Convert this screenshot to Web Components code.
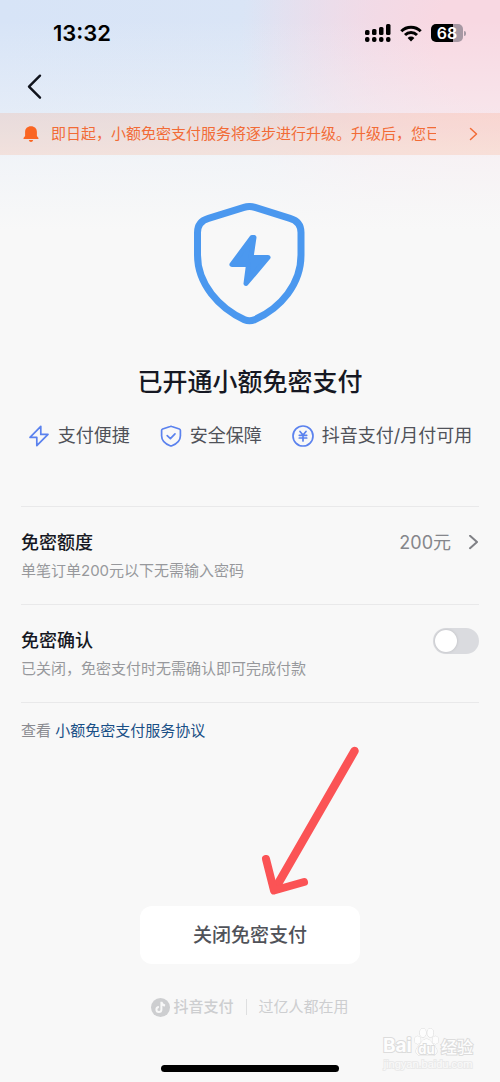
<!DOCTYPE html>
<html lang="zh-CN">
<head>
<meta charset="utf-8">
<meta name="viewport" content="width=device-width, initial-scale=1">
<title>小额免密支付</title>
<style>
  body {
    margin: 0;
    background: #f8f8f8;
    color: #161823;
    font-family: Inter, "Noto Sans CJK SC", sans-serif;
  }
</style>
</head>
<body>
<pay-page></pay-page>

<script>
const define = (name, html, setup) => {
  const template = document.createElement('template');
  template.innerHTML = html;
  customElements.define(name, class extends HTMLElement {
    constructor() {
      super();
      this.attachShadow({ mode: 'open' }).append(template.content.cloneNode(true));
    }
    connectedCallback() {
      if (setup) setup(this.shadowRoot, this);
    }
  });
};

/* Phone status bar: clock, signal, wifi, battery */
define('status-bar', `
  <style>
    :host { display: flex; align-items: center; justify-content: space-between; box-sizing: border-box;
      height: 60px; padding: 6px 34px 0 53px; color: #000; }
    time { font-size: 22px; line-height: 26px; font-weight: 600; }
    .icons { display: flex; align-items: center; gap: 9px; }
    svg { display: block; }
    .battery { display: flex; align-items: center; gap: 1px; }
    .cell { width: 32px; height: 18px; border-radius: 5px; text-align: center; color: #fff;
      font-size: 16px; line-height: 18px; font-weight: 600;
      background: linear-gradient(90deg, #000 68%, #a698a3 68%); }
    .nub { width: 2px; height: 5px; border-radius: 0 2px 2px 0; background: #a698a3; }
  </style>
  <time>13:32</time>
  <div class="icons">
    <svg width="26" height="18" viewBox="0 0 26 18" aria-hidden="true">
      <rect x="0" y="6" width="4.500" height="5" rx="1.500"/><rect x="7" y="5" width="4.500" height="6" rx="1.500"/>
      <rect x="14" y="3" width="4.500" height="8" rx="1.500"/><rect x="21" y="0" width="4.500" height="11" rx="1.500"/>
      <rect x="0" y="13" width="4.500" height="5" rx="2"/><rect x="7" y="13" width="4.500" height="5" rx="2"/>
      <rect x="14" y="13" width="4.500" height="5" rx="2"/><rect x="21" y="13" width="4.500" height="5" rx="2"/>
    </svg>
    <svg width="22" height="17" viewBox="0 0 22 17" aria-hidden="true">
      <g fill="none" stroke="#000" stroke-width="2.900"><path d="M1.300 6.300a13.800 13.800 0 0 1 19.400 0"/><path d="M5 10a8.500 8.500 0 0 1 12 0"/></g>
      <path d="M7.600 12.900a4.900 4.900 0 0 1 6.800 0L11 16.500z"/>
    </svg>
    <div class="battery"><div class="cell">68</div><div class="nub"></div></div>
  </div>`);

define('nav-bar', `
  <style>
    :host { display: flex; align-items: center; height: 53px; padding: 0 20px; }
    button { display: block; padding: 0 7px; border: 0; background: none; }
    svg { display: block; }
  </style>
  <button type="button" aria-label="返回">
    <svg width="15" height="26" viewBox="0 0 15 26" fill="none" stroke="#10131c" stroke-width="2.400" stroke-linecap="round" stroke-linejoin="round"><path d="M13 1.700L2 12.700l11 11"/></svg>
  </button>`);

define('notice-bar', `
  <style>
    :host { display: block; background: rgba(255, 110, 40, .13); color: #f26b36; }
    a { display: flex; align-items: center; height: 42px; padding: 0 22px 0 23px; color: inherit; text-decoration: none; }
    svg { display: block; flex: none; }
    span { flex: 1; min-width: 0; margin: 0 33px 0 12px; overflow: hidden; white-space: nowrap; font-size: 15px; line-height: 22px; }
  </style>
  <a href="#notice">
    <svg width="16" height="18" viewBox="0 0 16 18" fill="#fa6522" aria-hidden="true"><path d="M8 1.300c3.600 0 5.900 2.300 5.900 5.600v4l1.600 2.100q.4 1-.6 1H1.100q-1 0-.6-1l1.600-2.100v-4C2.100 3.600 4.400 1.300 8 1.300z"/><path d="M5.800 15h4.400Q9.700 17 8 17t-2.200-2z"/></svg>
    <span><slot></slot></span>
    <svg width="9" height="14" viewBox="0 0 9 14" fill="none" stroke="currentColor" stroke-width="1.500" stroke-linecap="round" stroke-linejoin="round"><path d="M1.500 1.500L7.500 7l-6 5.500"/></svg>
  </a>`);

define('hero-panel', `
  <style>
    :host { display: flex; flex-direction: column; align-items: center; padding-top: 48px; }
    svg { display: block; }
    h1 { margin: 39px 0 24px; font-size: 25px; line-height: 36px; font-weight: 500; }
    .features { display: flex; justify-content: center; gap: 30px; }
  </style>
  <svg width="112" height="122" viewBox="0 0 112 122" aria-hidden="true">
    <path d="M50 4.400Q55.500 2.600 61 4.400L96 15.300Q107 18.500 107 29.500V52C107 81 87 105 60.500 116.700Q55.500 119 50.500 116.700C25 105 3.500 81 3.500 52V29.500Q3.500 18.500 14.500 15.300z" fill="none" stroke="#4b98ef" stroke-width="7"/>
    <path d="M58 34.500L38 61.500H54.500L52 80.500L74 54.500H57L60 34.500z" fill="#4b98ef" stroke="#4b98ef" stroke-width="5" stroke-linejoin="round"/>
  </svg>
  <h1><slot name="title"></slot></h1>
  <div class="features"><slot></slot></div>`);

define('feature-item', `
  <style>
    :host { display: flex; align-items: center; gap: 8px; color: #505259; font-size: 18px; line-height: 24px; white-space: nowrap; }
    svg { display: block; }
  </style>
  <svg width="22" height="22" viewBox="0 0 22 22" fill="none" stroke="#5b82ee" stroke-width="1.700" stroke-linecap="round" stroke-linejoin="round" aria-hidden="true"></svg>
  <span><slot></slot></span>`, (root, host) => {
  root.querySelector('svg').innerHTML = {
    bolt: '<path d="M12.800 1.300L2 12.300H8.800V20.600L20 9.400H12.800z"/>',
    shield: '<path d="M10.200 1.500q.8-.3 1.600 0l7.600 2.500q1 .4 1 1.500v5.200c0 5-4 8.200-8.500 10q-.9.300-1.800 0C5.600 18.900 1.600 15.700 1.600 10.700V5.500q0-1.100 1-1.500z"/><path d="M7.200 10.600l3.200 3 4.600-4.800"/>',
    yen: '<circle cx="11" cy="11" r="10"/><path d="M8 6.500l3 3.500 3-3.500M7.300 10.300h7.400M7.300 13h7.400M11 10v6"/>'
  }[host.getAttribute('icon')];
});

const rowStyle = `
    :host { display: block; padding: 23px 0; border-bottom: 1px solid #e9e9ea; }
    .head { display: flex; align-items: center; justify-content: space-between; height: 26px;
      font-size: 18px; line-height: 26px; font-weight: 500; color: #161823; text-decoration: none; }
    p { margin: 5px 0 0; font-size: 15px; line-height: 20px; color: #97989c; }`;

define('link-row', `
  <style>${rowStyle}
    .value { display: flex; align-items: center; gap: 17px; font-weight: 400; color: #85868b; }
    svg { display: block; }
  </style>
  <a class="head" href="#limit">
    <slot name="label"></slot>
    <span class="value"><slot name="value"></slot>
      <svg width="11" height="16" viewBox="0 0 11 16" fill="none" stroke="#7f8085" stroke-width="2" stroke-linecap="round" stroke-linejoin="round"><path d="M2 0.800L9 7l-7 6.200"/></svg>
    </span>
  </a>
  <p><slot></slot></p>`);

define('switch-row', `
  <style>${rowStyle}
    input { appearance: none; flex: none; box-sizing: border-box; width: 46px; height: 26px; margin: 0; padding: 2px;
      border-radius: 13px; background: #dadbdf; }
    input::before { content: ""; display: block; width: 22px; height: 22px; border-radius: 50%; background: #fff; box-shadow: 0 0 3px rgba(0, 0, 0, .15); }
    input:checked { background: #4b98ef; }
    input:checked::before { margin-left: 20px; }
  </style>
  <div class="head"><label for="toggle"><slot name="label"></slot></label><input id="toggle" type="checkbox" role="switch"></div>
  <p><slot></slot></p>`);

define('close-action', `
  <style>
    :host { display: block; position: relative; width: 220px; margin: auto auto 0; }
    button { display: block; width: 100%; height: 58px; padding: 2px 0 0; border: 0; border-radius: 12px; background: #fff; color: #505259;
      font: inherit; font-size: 19px; line-height: 28px; font-weight: 500; }
    svg { position: absolute; left: 120px; bottom: 68px; pointer-events: none; }
  </style>
  <button type="button"><slot></slot></button>
  <svg width="100" height="151" viewBox="0 0 100 151" fill="none" stroke="#fb5355" stroke-width="8" stroke-linecap="round" stroke-linejoin="round" aria-hidden="true"><path d="M94.500 6L15 144" stroke-width="8.500"/><path d="M6 114l8 31.500L44 137"/></svg>`);

define('brand-footer', `
  <style>
    :host { display: flex; align-items: center; justify-content: center; height: 20px; font-size: 15px; line-height: 20px; color: #cdced0; }
    svg { display: block; margin-right: 3px; }
    .brand { font-weight: 500; }
    .slogan { margin-left: 12px; padding-left: 12px; border-left: 1px solid #dedfe0; line-height: 16px; }
  </style>
  <svg width="19" height="19" viewBox="0 0 19 19" aria-hidden="true"><circle cx="9.500" cy="9.500" r="9.500" fill="#cdced0"/><path d="M10.400 3.800v7.700a2.500 2.500 0 1 1-2.500-2.500M10.400 4c.3 2 1.600 3.300 3.700 3.500" fill="none" stroke="#f8f8f8" stroke-width="2"/></svg>
  <span class="brand"><slot name="brand"></slot></span>
  <span class="slogan"><slot></slot></span>`);

define('corner-mark', `
  <style>
    :host { display: block; position: absolute; right: 27px; bottom: 11px; width: 90px; color: #fdfdfd;
      -webkit-text-stroke: 2px #dcdcdc; paint-order: stroke fill; pointer-events: none; }
    .name { display: flex; align-items: flex-end; justify-content: space-between; height: 31px; font: 700 19px/22px Inter, sans-serif; }
    .paw { display: grid; }
    .paw > * { grid-area: 1 / 1; }
    svg { display: block; }
    .du { align-self: end; justify-self: center; font-size: 13px; line-height: 16px; }
    .cn { font-family: "Noto Sans CJK SC", sans-serif; font-size: 16px; font-weight: 500; }
    .url { font: 11px/14px "Liberation Sans", sans-serif; color: #fafafa; text-align: center; -webkit-text-stroke-color: #eaeaea; }
  </style>
  <div class="name">
    <span>Bai</span>
    <span class="paw">
      <svg width="25" height="30" viewBox="0 0 26 30" fill="#fdfdfd" stroke="#d8d8d8" aria-hidden="true"><ellipse cx="3.800" cy="13" rx="3.200" ry="4"/><ellipse cx="9.300" cy="5.500" rx="3.200" ry="4.500"/><ellipse cx="17" cy="5.500" rx="3.200" ry="4.500"/><ellipse cx="22.300" cy="13" rx="3.200" ry="4"/><path d="M13 12c4 0 5 4 8 7 5 5 3 10-2 10H7c-5 0-7-5-2-10 3-3 4-7 8-7z"/></svg>
      <span class="du">du</span>
    </span>
    <span class="cn">经验</span>
  </div>
  <div class="url">jingyan.baidu.com</div>`);

define('pay-page', `
  <style>
    :host { display: flex; flex-direction: column; position: relative; box-sizing: border-box; min-height: 100vh; padding-bottom: 10px;
      background:
        linear-gradient(180deg, rgba(248, 248, 248, 0) 20px, rgba(248, 248, 248, .4) 112px, rgba(248, 248, 248, .8) 160px, #f8f8f8 230px),
        radial-gradient(circle 260px at 100% 40px, #f8d8e2 25%, rgba(248, 216, 226, 0) 100%),
        linear-gradient(90deg, #d7e4f7 0%, #dae5f6 50%, #e6dfef 75%); }
    .settings { margin: 58px 21px 0; border-top: 1px solid #e9e9ea; }
    .agreement { margin: 18px 21px 24px; font-size: 15px; line-height: 20px; color: #8a8b90; }
    .agreement a { color: #194f86; text-decoration: none; }
    brand-footer { margin: 33px 0 48px; }
    .home { flex: none; align-self: center; width: 178px; height: 7px; border-radius: 4px; background: #000; }
  </style>
  <status-bar></status-bar>
  <nav-bar></nav-bar>
  <notice-bar>即日起，小额免密支付服务将逐步进行升级。升级后，您已</notice-bar>
  <hero-panel>
    <span slot="title">已开通小额免密支付</span>
    <feature-item icon="bolt">支付便捷</feature-item>
    <feature-item icon="shield">安全保障</feature-item>
    <feature-item icon="yen">抖音支付/月付可用</feature-item>
  </hero-panel>
  <div class="settings">
    <link-row><span slot="label">免密额度</span><span slot="value">200元</span>单笔订单200元以下无需输入密码</link-row>
    <switch-row><span slot="label">免密确认</span>已关闭，免密支付时无需确认即可完成付款</switch-row>
  </div>
  <div class="agreement">查看 <a href="#agreement">小额免密支付服务协议</a></div>
  <close-action>关闭免密支付</close-action>
  <brand-footer><span slot="brand">抖音支付</span>过亿人都在用</brand-footer>
  <div class="home"></div>
  <corner-mark></corner-mark>`);
</script>
</body>
</html>
